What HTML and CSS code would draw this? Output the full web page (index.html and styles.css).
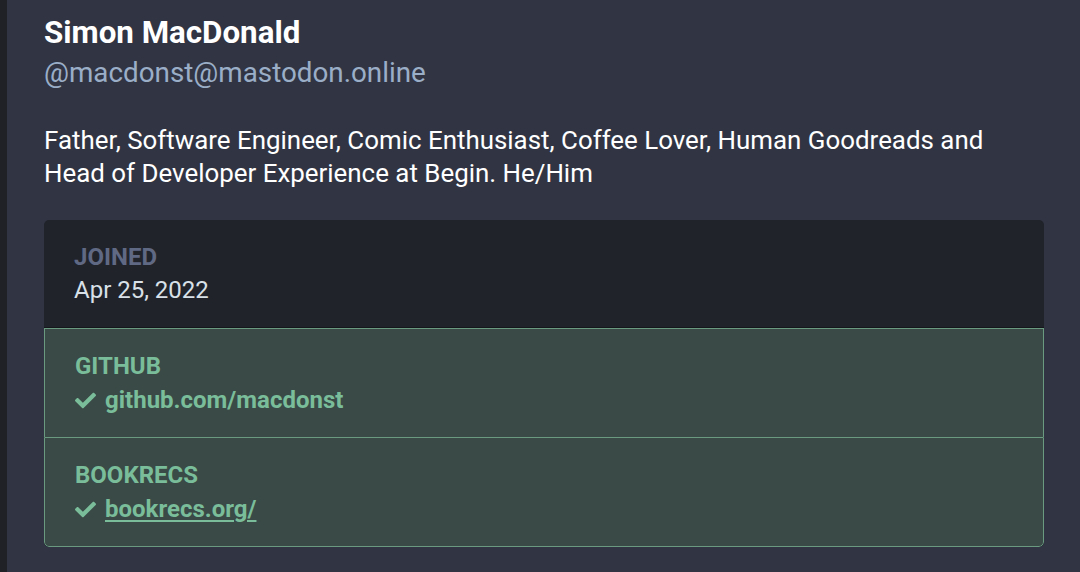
FILE: index.html
```html
<!DOCTYPE html>
<html>
<head>
<meta charset="utf-8">
<link rel="stylesheet" href="styles.css">
</head>
<body>
<div class="page">
  <div class="strip"></div>
  <main class="profile">
    <h1 class="name">Simon MacDonald</h1>
    <div class="handle">@macdonst@mastodon.online</div>
    <p class="bio">Father, Software Engineer, Comic Enthusiast, Coffee Lover, Human Goodreads and Head of Developer Experience at Begin. He/Him</p>
    <dl class="fields">
      <div class="field">
        <dt class="label">JOINED</dt>
        <dd class="value">Apr 25, 2022</dd>
      </div>
      <div class="field verified">
        <dt class="label">GITHUB</dt>
        <dd class="value"><svg class="check" viewBox="0 0 512 512"><path d="M173.9 439.4l-166.4-166.4c-10-10-10-26.2 0-36.2l36.2-36.2c10-10 26.2-10 36.2 0L192 312.7 432.1 72.6c10-10 26.2-10 36.2 0l36.2 36.2c10 10 10 26.2 0 36.2l-294.4 294.4c-10 10-26.2 10-36.2 0z" fill="currentColor"/></svg><span>github.com/macdonst</span></dd>
      </div>
      <div class="field verified">
        <dt class="label">BOOKRECS</dt>
        <dd class="value"><svg class="check" viewBox="0 0 512 512"><path d="M173.9 439.4l-166.4-166.4c-10-10-10-26.2 0-36.2l36.2-36.2c10-10 26.2-10 36.2 0L192 312.7 432.1 72.6c10-10 26.2-10 36.2 0l36.2 36.2c10 10 10 26.2 0 36.2l-294.4 294.4c-10 10-26.2 10-36.2 0z" fill="currentColor"/></svg><a class="link" href="#">bookrecs.org/</a></dd>
      </div>
    </dl>
  </main>
</div>
</body>
</html>
```
FILE: styles.css
```css
html, body {
  margin: 0;
  padding: 0;
  background: #313543;
  font-family: Roboto, "Liberation Sans", sans-serif;
  height: 100%;
  overflow: hidden;
}
.page {
  display: flex;
  height: 572px;
}
.strip {
  width: 7px;
  flex: none;
  background: #1f2127;
}
.profile {
  flex: 1;
  padding: 14px 36px 0 37px;
}
.name {
  margin: 0;
  font-size: 31.3px;
  font-weight: 700;
  line-height: 38px;
  color: #ffffff;
}
.handle {
  font-size: 27.8px;
  line-height: 34px;
  margin-top: 4px;
  color: #9baec8;
}
.bio {
  margin: 34px 0 0;
  font-size: 25.9px;
  line-height: 33px;
  color: #ffffff;
}
.fields {
  margin: 30px 0 0;
  padding: 0;
  background: #21232b;
  border-radius: 5px;
  overflow: hidden;
}
.field {
  padding: 23px 30px 22px;
  border-bottom: 1px solid #15161b;
}
.field:last-child {
  border-bottom: 0;
}
.label {
  font-size: 24px;
  font-weight: 700;
  line-height: 28px;
  color: #606984;
}
.value {
  margin: 4px 0 0;
  font-size: 24px;
  line-height: 30px;
  color: #d9e1e8;
  display: flex;
  align-items: center;
}
.verified {
  background: #3a4a46;
  border: 1px solid #6a9a80;
  border-bottom: 0;
}
.verified .value {
  margin-top: 5px;
}
.verified:last-child {
  border-bottom: 1px solid #6a9a80;
  border-radius: 0 0 5px 5px;
}
.verified .label,
.verified .value {
  color: #79bd9a;
}
.verified .value {
  font-weight: 700;
}
.check {
  width: 21px;
  height: 21px;
  margin-right: 9px;
}
.link {
  color: #79bd9a;
  text-decoration: underline;
  text-underline-offset: 3px;
}
```
